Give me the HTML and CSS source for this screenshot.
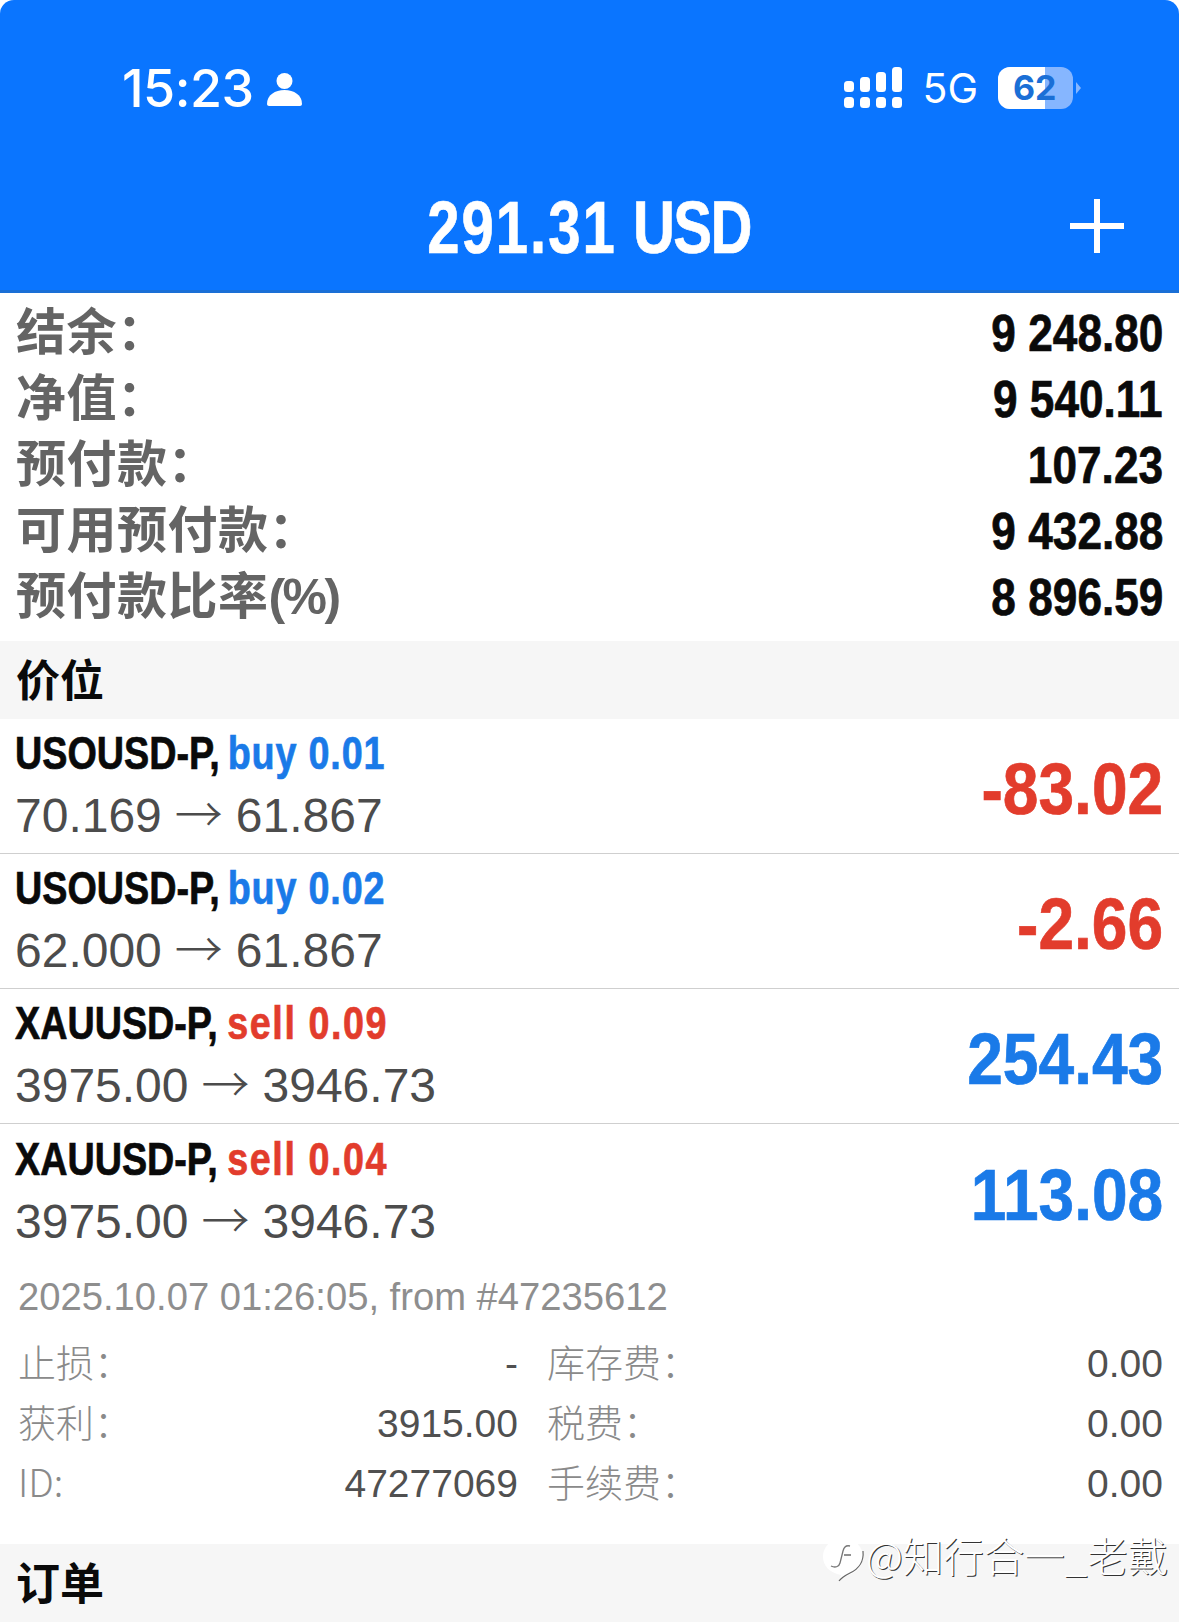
FILE: index.html
```html
<!DOCTYPE html>
<html lang="en">
<head>
    <meta charset="UTF-8">
    <title>Trade</title>
    <link rel="stylesheet" href="styles.css">
</head>
<body>
    <div class="screen">
        <header class="header">
            <div class="status">
                <div class="status-left">
                    <span class="time">15:23</span>
                    <svg class="person" width="35" height="35" viewBox="0 0 35 35"><circle cx="17.5" cy="10" r="8"/><path d="M0 33c0-9 8-14 17.5-14S35 24 35 33c0 1-1 2-2 2H2c-1 0-2-1-2-2z"/></svg>
                </div>
                <div class="status-right">
                    <svg class="signal" width="58" height="42" viewBox="0 0 58 42" fill="#fff">
                        <rect x="0" y="14" width="10" height="11" rx="3.5"/>
                        <rect x="16" y="10" width="10" height="15" rx="3.5"/>
                        <rect x="32" y="5" width="10" height="20" rx="3.5"/>
                        <rect x="48" y="0" width="10" height="25" rx="3.5"/>
                        <rect x="0" y="30" width="10" height="11" rx="3.5"/>
                        <rect x="16" y="30" width="10" height="11" rx="3.5"/>
                        <rect x="32" y="30" width="10" height="11" rx="3.5"/>
                        <rect x="48" y="30" width="10" height="11" rx="3.5"/>
                    </svg>
                    <span class="net">5G</span>
                    <div class="battery">
                        <div class="battery-fill"></div>
                        <span class="battery-num">62</span>
                    </div>
                    <div class="battery-tip"></div>
                </div>
            </div>
            <div class="title-bar">
                <span class="title"><span class="title-num">291.31</span> <span class="title-cur">USD</span></span>
                <svg class="plus" width="54" height="54" viewBox="0 0 54 54" fill="#fff"><rect x="0" y="24" width="54" height="6"/><rect x="24" y="0" width="6" height="54"/></svg>
            </div>
        </header>

        <section class="summary">
            <div class="sum-row"><span class="sum-label">结余：</span><span class="squeeze sum-val">9 248.80</span></div>
            <div class="sum-row"><span class="sum-label">净值：</span><span class="squeeze sum-val">9 540.11</span></div>
            <div class="sum-row"><span class="sum-label">预付款：</span><span class="squeeze sum-val">107.23</span></div>
            <div class="sum-row"><span class="sum-label">可用预付款：</span><span class="squeeze sum-val">9 432.88</span></div>
            <div class="sum-row"><span class="sum-label">预付款比率<span class="pct">(%)</span></span><span class="squeeze sum-val">8 896.59</span></div>
        </section>

        <div class="section-head">价位</div>

        <section class="positions">
            <div class="pos">
                <div class="pos-left">
                    <div class="pos-title">USOUSD-P, <span class="blue">buy 0.01</span></div>
                    <div class="pos-price">70.169<span class="arrow">→</span>61.867</div>
                </div>
                <span class="squeeze pos-pnl red">-83.02</span>
            </div>
            <div class="pos">
                <div class="pos-left">
                    <div class="pos-title">USOUSD-P, <span class="blue">buy 0.02</span></div>
                    <div class="pos-price">62.000<span class="arrow">→</span>61.867</div>
                </div>
                <span class="squeeze pos-pnl red">-2.66</span>
            </div>
            <div class="pos">
                <div class="pos-left">
                    <div class="pos-title">XAUUSD-P, <span class="red">sell 0.09</span></div>
                    <div class="pos-price">3975.00<span class="arrow">→</span>3946.73</div>
                </div>
                <span class="squeeze pos-pnl blue">254.43</span>
            </div>
            <div class="pos last">
                <div class="pos-left">
                    <div class="pos-title">XAUUSD-P, <span class="red">sell 0.04</span></div>
                    <div class="pos-price">3975.00<span class="arrow">→</span>3946.73</div>
                </div>
                <span class="squeeze pos-pnl blue">113.08</span>
            </div>
        </section>

        <section class="detail">
            <div class="detail-date">2025.10.07 01:26:05, from #47235612</div>
            <div class="detail-grid">
                <span class="d-label">止损：</span><span class="d-val">-</span><span class="d-label col-b">库存费：</span><span class="d-val">0.00</span>
                <span class="d-label">获利：</span><span class="d-val">3915.00</span><span class="d-label col-b">税费：</span><span class="d-val">0.00</span>
                <span class="d-label">ID:</span><span class="d-val">47277069</span><span class="d-label col-b">手续费：</span><span class="d-val">0.00</span>
            </div>
        </section>

        <div class="section-head orders">订单</div>

        <div class="watermark">
            <svg width="44" height="46" viewBox="0 0 44 46" fill="none">
                <path d="M21 1c11 0 20 8 20 19 0 8-5 14-12 17-4 2-8 3-12 8l2-7C8 36 1 29 1 20 1 9 10 1 21 1z" fill="#fff"/>
                <path d="M41 14c1 10-4 18-13 22-4 2-8 4-11 8" stroke="#666" stroke-width="1.2"/>
                <path d="M28 9c-4-1-6 1-7 5l-3 12c-1 4-5 5-9 3" stroke="#777" stroke-width="1.3"/>
                <path d="M22 18h7" stroke="#555" stroke-width="1.3"/>
            </svg>
            <span class="mark-text">@知行合一_老戴</span>
        </div>
    </div>
</body>
</html>
```

FILE: styles.css
```css
* {
    box-sizing: border-box;
}

html, body {
    margin: 0;
    padding: 0;
    background: #fff;
}

body {
    font-family: "Liberation Sans", "Noto Sans CJK SC", sans-serif;
}

.screen {
    position: relative;
    width: 1179px;
    height: 1624px;
    overflow: hidden;
    background: #fff;
}

/* the app font is narrower than anything installed */
.squeeze {
    display: inline-block;
    transform: scaleX(0.85);
    transform-origin: right center;
    white-space: pre;
    -webkit-text-stroke: 0.7px currentColor;
}

.blue {
    color: #1a7ae8;
}

.red {
    color: #e23c2c;
}

/* header */
.header {
    height: 293px;
    background: #0a75ff;
    border-bottom: 3px solid #1a6fd6;
    border-radius: 14px 14px 0 0;
    color: #fff;
}

.status {
    display: flex;
    justify-content: space-between;
    align-items: center;
    height: 176px;
    padding: 0 98px 0 122px;
}

.status-left, .status-right {
    display: flex;
    align-items: center;
}

.time {
    font-family: Inter, sans-serif;
    font-size: 52px;
    font-weight: 500;
    letter-spacing: -0.5px;
}

.person {
    margin-left: 13px;
    fill: #fff;
}

.net {
    margin: 0 20px 0 20px;
    font-family: Inter, sans-serif;
    font-size: 41px;
}

.battery {
    position: relative;
    width: 75px;
    height: 42px;
    overflow: hidden;
    border-radius: 12px;
    background: #86b6ff;
}

.battery-fill {
    width: 47px;
    height: 100%;
    background: #fff;
}

.battery-num {
    position: absolute;
    top: 0;
    left: 15px;
    font-family: Inter, sans-serif;
    font-size: 34px;
    line-height: 42px;
    font-weight: 700;
    color: #1a6fd6;
}

.battery-tip {
    width: 0;
    height: 0;
    margin-left: 3px;
    border-top: 6px solid transparent;
    border-bottom: 6px solid transparent;
    border-left: 5px solid #86b6ff;
}

.title-bar {
    position: relative;
    display: flex;
    justify-content: center;
    height: 100px;
}

.title {
    display: inline-block;
    margin-top: 14px;
    font-size: 74px;
    line-height: 76px;
    font-weight: 700;
    transform: scaleX(0.785);
    white-space: pre;
    -webkit-text-stroke: 0.7px currentColor;
}

.title-num {
    letter-spacing: 2.5px;
}

.title-cur {
    letter-spacing: -2px;
}

.plus {
    position: absolute;
    top: 23px;
    right: 55px;
}

/* account summary */
.summary {
    padding: 7px 16px 11px;
}

.sum-row {
    display: flex;
    justify-content: space-between;
    align-items: center;
    height: 66px;
}

.sum-label {
    margin-bottom: 10px;
    font-size: 50px;
    font-weight: 700;
    color: #646464;
    letter-spacing: 0.5px;
}

.pct {
    letter-spacing: -2.6px;
}

.sum-val {
    font-size: 52px;
    font-weight: 700;
    color: #0a0a0a;
}

.section-head {
    display: flex;
    align-items: center;
    height: 78px;
    padding: 0 0 4px 16px;
    background: #f6f6f6;
    font-family: "Noto Sans CJK SC", sans-serif;
    font-size: 44px;
    font-weight: 700;
    color: #0a0a0a;
}

/* positions */
.pos {
    display: flex;
    justify-content: space-between;
    align-items: center;
    height: 135px;
    padding: 0 16px 0 15px;
    border-bottom: 1px solid #cfcfcf;
}

.pos.last {
    border-bottom: none;
}

.pos-left {
    margin-bottom: 7px;
}

.pos-title {
    width: 600px;
    font-size: 46px;
    line-height: 62px;
    font-weight: 700;
    color: #0a0a0a;
    word-spacing: -3px;
    transform: scaleX(0.82);
    transform-origin: left center;
    white-space: pre;
    -webkit-text-stroke: 0.7px currentColor;
}

.pos-title span {
    letter-spacing: 1px;
    word-spacing: 0;
}

.pos-title .red {
    margin-left: 2px;
    letter-spacing: 1.9px;
}

.pos-price {
    font-size: 48px;
    line-height: 54px;
    color: #4c4c4c;
}

.arrow {
    margin: 0 13px;
    font-family: "Noto Sans CJK SC", sans-serif;
    font-size: 48px;
    font-weight: 300;
}

.pos-pnl {
    margin-top: 6px;
    font-size: 72px;
    font-weight: 700;
    transform: scaleX(0.89);
}

/* detail block */
.detail {
    padding: 0 16px;
}

.detail-date {
    padding: 13px 2px 0;
    font-size: 38.2px;
    line-height: 50px;
    color: #8e8e8e;
}

.detail-grid {
    display: grid;
    grid-template-columns: 250px 252px 300px 1fr;
    margin-top: 12px;
}

.d-label {
    padding-left: 2px;
    font-family: "Noto Sans CJK SC", sans-serif;
    font-size: 38px;
    font-weight: 300;
    line-height: 54px;
    color: #8a8a8a;
}

.d-label.col-b {
    padding-left: 29px;
}

.d-val {
    text-align: right;
    font-size: 39px;
    line-height: 60px;
    color: #505050;
}

.orders {
    margin-top: 30px;
}

/* watermark on top of the screenshot */
.watermark {
    position: absolute;
    top: 1537px;
    left: 822px;
    display: flex;
    align-items: flex-start;
}

.mark-text {
    font-family: "Noto Sans CJK SC", sans-serif;
    font-size: 40.5px;
    font-weight: 300;
    line-height: 36px;
    color: #fff;
    text-shadow: 1px 1px 0 #333;
}
```
